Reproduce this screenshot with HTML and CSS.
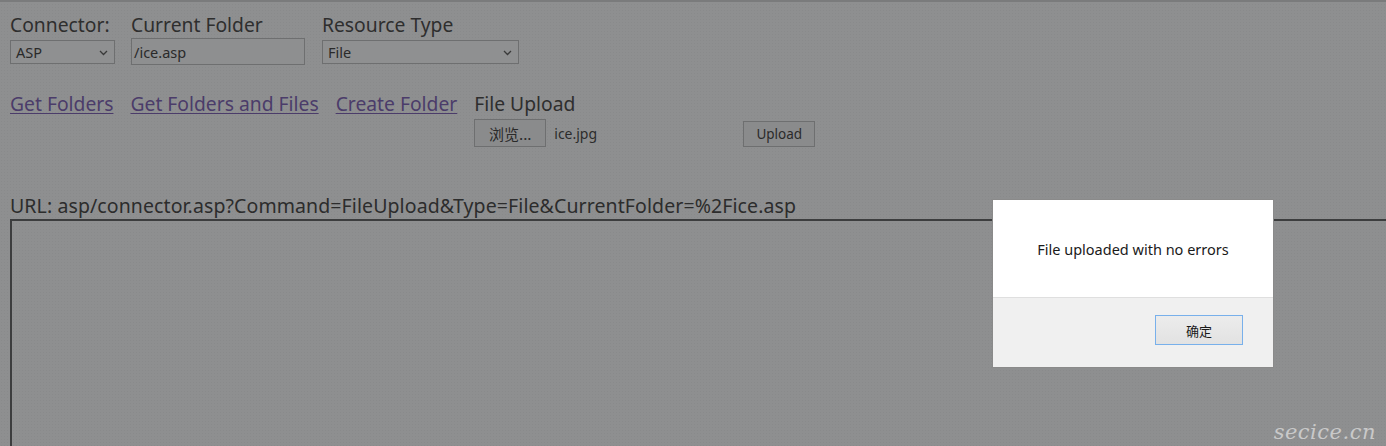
FILE: index.html
```html
<!DOCTYPE html>
<html>
<head>
<meta charset="utf-8">
<link rel="stylesheet" href="styles.css">
</head>
<body>
<div class="page">
  <div class="fields">
    <div class="field f-conn">
      <label class="lbl">Connector:</label>
      <div class="select sel-conn"><span>ASP</span><svg class="chev" width="9" height="6" viewBox="0 0 9 6"><path d="M1 1l3.5 3.5L8 1" fill="none" stroke="#3a3a3a" stroke-width="1.3"/></svg></div>
    </div>
    <div class="field f-folder">
      <label class="lbl">Current Folder</label>
      <div class="input"><span>/ice.asp</span></div>
    </div>
    <div class="field f-type">
      <label class="lbl">Resource Type</label>
      <div class="select sel-type"><span>File</span><svg class="chev" width="9" height="6" viewBox="0 0 9 6"><path d="M1 1l3.5 3.5L8 1" fill="none" stroke="#3a3a3a" stroke-width="1.3"/></svg></div>
    </div>
  </div>

  <div class="actions">
    <a class="lnk" href="#">Get Folders</a>
    <a class="lnk" href="#">Get Folders and Files</a>
    <a class="lnk" href="#">Create Folder</a>
    <div class="upload">
      <div class="lbl">File Upload</div>
      <div class="upload-row">
        <div class="btn btn-browse">浏览...</div>
        <span class="fname">ice.jpg</span>
        <div class="btn btn-upload">Upload</div>
      </div>
    </div>
  </div>

  <div class="url">URL: asp/connector.asp?Command=FileUpload&amp;Type=File&amp;CurrentFolder=%2Fice.asp</div>
  <div class="frame"></div>
</div>

<div class="dialog">
  <div class="dlg-body">File uploaded with no errors</div>
  <div class="dlg-foot"><div class="dlg-btn">确定</div></div>
</div>

<div class="watermark">secice.cn</div>
</body>
</html>
```

FILE: styles.css
```css
html, body {
  margin: 0;
  padding: 0;
  height: 100%;
  overflow: hidden;
}
body {
  background-color: #8e8f90;
  background-image: radial-gradient(rgba(0,0,0,0.035) 0.6px, transparent 0.8px);
  background-size: 3px 3px;
  border-top: 2px solid #7a7b7c;
  font-family: "Noto Sans", "Open Sans", sans-serif;
  color: #2c2c2c;
  box-sizing: border-box;
}
.page {
  padding: 10px 0 0 10px;
}
.fields {
  display: flex;
  align-items: flex-start;
}
.field {
  display: flex;
  flex-direction: column;
}
.lbl {
  font-size: 19.3px;
  line-height: 26px;
  color: #2e2e2e;
}
.f-conn { width: 121px; }
.f-folder { width: 191px; }
.select, .input {
  box-sizing: border-box;
  border: 1px solid #6e6f70;
  font-size: 14.5px;
  color: #2a2a2a;
  display: flex;
  align-items: center;
}
.select {
  height: 24px;
  margin-top: 2px;
  padding: 0 6px 0 5px;
  justify-content: space-between;
  background: #8f9091;
}
.input {
  height: 27px;
  padding: 0 6px 0 2px;
  background: #8e8f90;
}
.sel-conn { width: 105px; }
.input { width: 174px; }
.sel-type { width: 197px; }
.chev { margin-top: 1px; }

.actions {
  display: flex;
  align-items: flex-start;
  margin-top: 26px;
  height: 79px;
}
.lnk {
  font-size: 19.3px;
  line-height: 26px;
  color: #4b3c6a;
  text-decoration: underline;
  text-underline-offset: 2px;
  margin-right: 17px;
}
.upload {
  display: flex;
  flex-direction: column;
}
.upload-row {
  display: flex;
  align-items: center;
  margin-top: 2px;
}
.btn {
  box-sizing: border-box;
  border: 1px solid #6e6f70;
  background: #8a8b8c;
  font-size: 13.5px;
  color: #2a2a2a;
  display: flex;
  align-items: center;
  justify-content: center;
}
.btn-browse {
  width: 72px;
  height: 28px;
  font-family: "Noto Sans CJK SC", "Noto Sans", sans-serif;
  font-size: 15px;
}
.fname {
  font-size: 14px;
  margin-left: 8px;
  width: 189px;
}
.btn-upload {
  width: 72px;
  height: 26px;
  margin-top: 2px;
}

.url {
  margin-top: 24px;
  font-size: 19.5px;
  line-height: 24px;
  color: #2c2c2c;
  letter-spacing: 0.1px;
}
.frame {
  margin-top: 1px;
  height: 400px;
  border: 2px solid #3c3d3e;
  border-right: none;
  border-bottom: none;
  margin-right: -10px;
}

.dialog {
  position: absolute;
  left: 992px;
  top: 199px;
  width: 282px;
  height: 169px;
  box-sizing: border-box;
  border: 1px solid #8a8a8a;
  background: #f0f0f0;
  display: flex;
  flex-direction: column;
  font-family: "Noto Sans", sans-serif;
}
.dlg-body {
  background: #fff;
  height: 98px;
  border-bottom: 1px solid #dfdfdf;
  display: flex;
  align-items: center;
  justify-content: center;
  font-size: 14.5px;
  color: #1a1a1a;
  box-sizing: border-box;
}
.dlg-foot {
  flex: 1;
  display: flex;
  justify-content: flex-end;
  padding: 17px 30px 0 0;
}
.dlg-btn {
  box-sizing: border-box;
  width: 88px;
  height: 30px;
  border: 1px solid #78b0eb;
  background: linear-gradient(#ececec, #e2e2e2);
  display: flex;
  align-items: center;
  justify-content: center;
  font-family: "Noto Sans CJK SC", sans-serif;
  font-size: 13px;
  color: #1a1a1a;
}

.watermark {
  position: absolute;
  right: 10px;
  bottom: 2px;
  font-family: "DejaVu Serif", serif;
  font-style: italic;
  font-size: 21px;
  color: #c9c9c9;
  letter-spacing: 0.5px;
}
```
